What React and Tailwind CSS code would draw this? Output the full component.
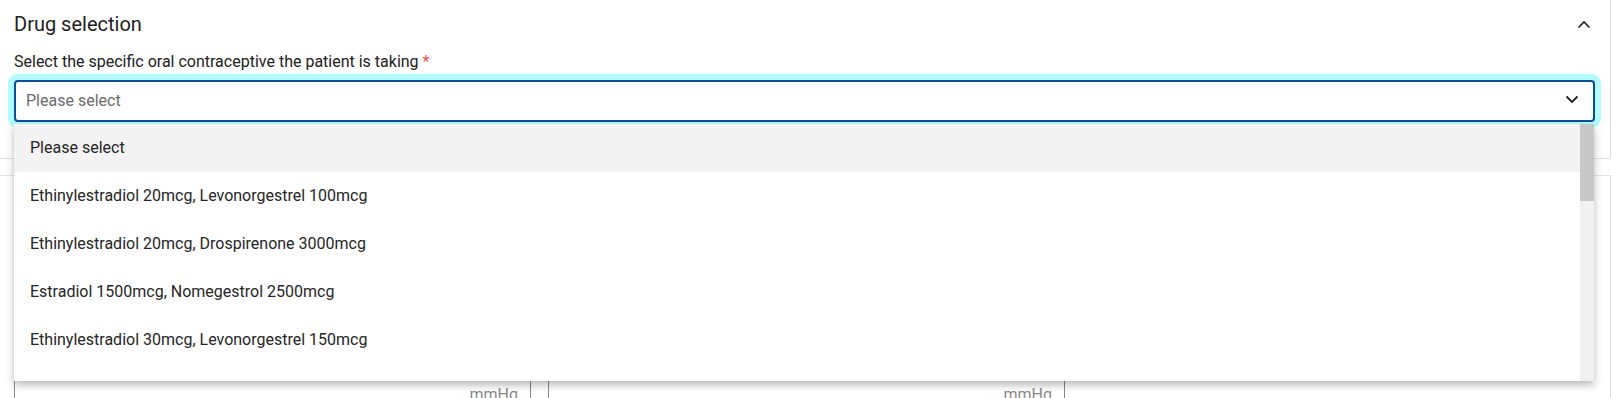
import React from "react";

const options = [
  "Please select",
  "Ethinylestradiol 20mcg, Levonorgestrel 100mcg",
  "Ethinylestradiol 20mcg, Drospirenone 3000mcg",
  "Estradiol 1500mcg, Nomegestrol 2500mcg",
  "Ethinylestradiol 30mcg, Levonorgestrel 150mcg",
  "Ethinylestradiol 30mcg, Desogestrel 150mcg",
];

function ChevronUp() {
  return (
    <svg width="14" height="9" viewBox="0 0 14 9" fill="none">
      <path d="M1.5 7.5 7 2l5.5 5.5" stroke="#1f1f1f" strokeWidth="1.6" />
    </svg>
  );
}

function ChevronDown() {
  return (
    <svg width="14" height="9" viewBox="0 0 14 9" fill="none">
      <path d="M1.5 1.5 7 7l5.5-5.5" stroke="#1f1f1f" strokeWidth="1.8" />
    </svg>
  );
}

function UnitInput() {
  return (
    <div className="flex h-[40px] w-[517px] items-start justify-end rounded-[3px] border border-[#8a8a8a] px-3 pt-[8px] text-[16px] leading-6 text-[#8a8a8a]">
      mmHg
    </div>
  );
}

export default function App() {
  return (
    <div className="h-[398px] w-[1612px] overflow-hidden bg-white font-['Roboto',sans-serif] text-[#212121]">
      <section className="w-[1611px] border-r border-b border-[#e3e3e3] pt-[10px] pr-[15px] pb-[36px] pl-[14px]">
        <div className="flex items-center justify-between">
          <h2 className="text-[20px] leading-7 font-normal">Drug selection</h2>
          <span className="mr-[4px] flex">
            <ChevronUp />
          </span>
        </div>

        <label className="mt-[12px] block text-[16px] leading-6">
          Select the specific oral contraceptive the patient is taking{" "}
          <span className="text-[#ef5350]">*</span>
        </label>

        <div className="relative mt-[6px]">
          <div className="flex h-[42px] items-center justify-between rounded-[4px] border-2 border-[#0a4f99] bg-white pl-[10px] pr-[14px] ring-[6px] ring-[#b3fbff]">
            <span className="text-[16px] leading-6 text-[#6b6b6b]">Please select</span>
            <span className="mt-[-3px] flex">
              <ChevronDown />
            </span>
          </div>

          <div className="absolute top-[44px] right-px left-0 z-10 flex h-[257px] overflow-hidden bg-white shadow-[0_4px_8px_rgba(0,0,0,0.28)]">
            <ul className="flex-1">
              {options.map((opt, i) => (
                <li
                  key={opt}
                  className={`flex h-[48px] items-center px-4 text-[16px] text-[#262626] ${
                    i === 0 ? "bg-[#f3f3f3]" : "bg-white"
                  }`}
                >
                  {opt}
                </li>
              ))}
            </ul>
            <div className="w-[14px] bg-[#f1f1f1]">
              <div className="h-[77px] bg-[#c8c8c8]" />
            </div>
          </div>
        </div>
      </section>

      <section className="mt-[16px] w-[1611px] border-t border-r border-[#e3e3e3] pt-[198px] pl-[14px]">
        <div className="flex gap-[17px]">
          <UnitInput />
          <UnitInput />
        </div>
      </section>
    </div>
  );
}
